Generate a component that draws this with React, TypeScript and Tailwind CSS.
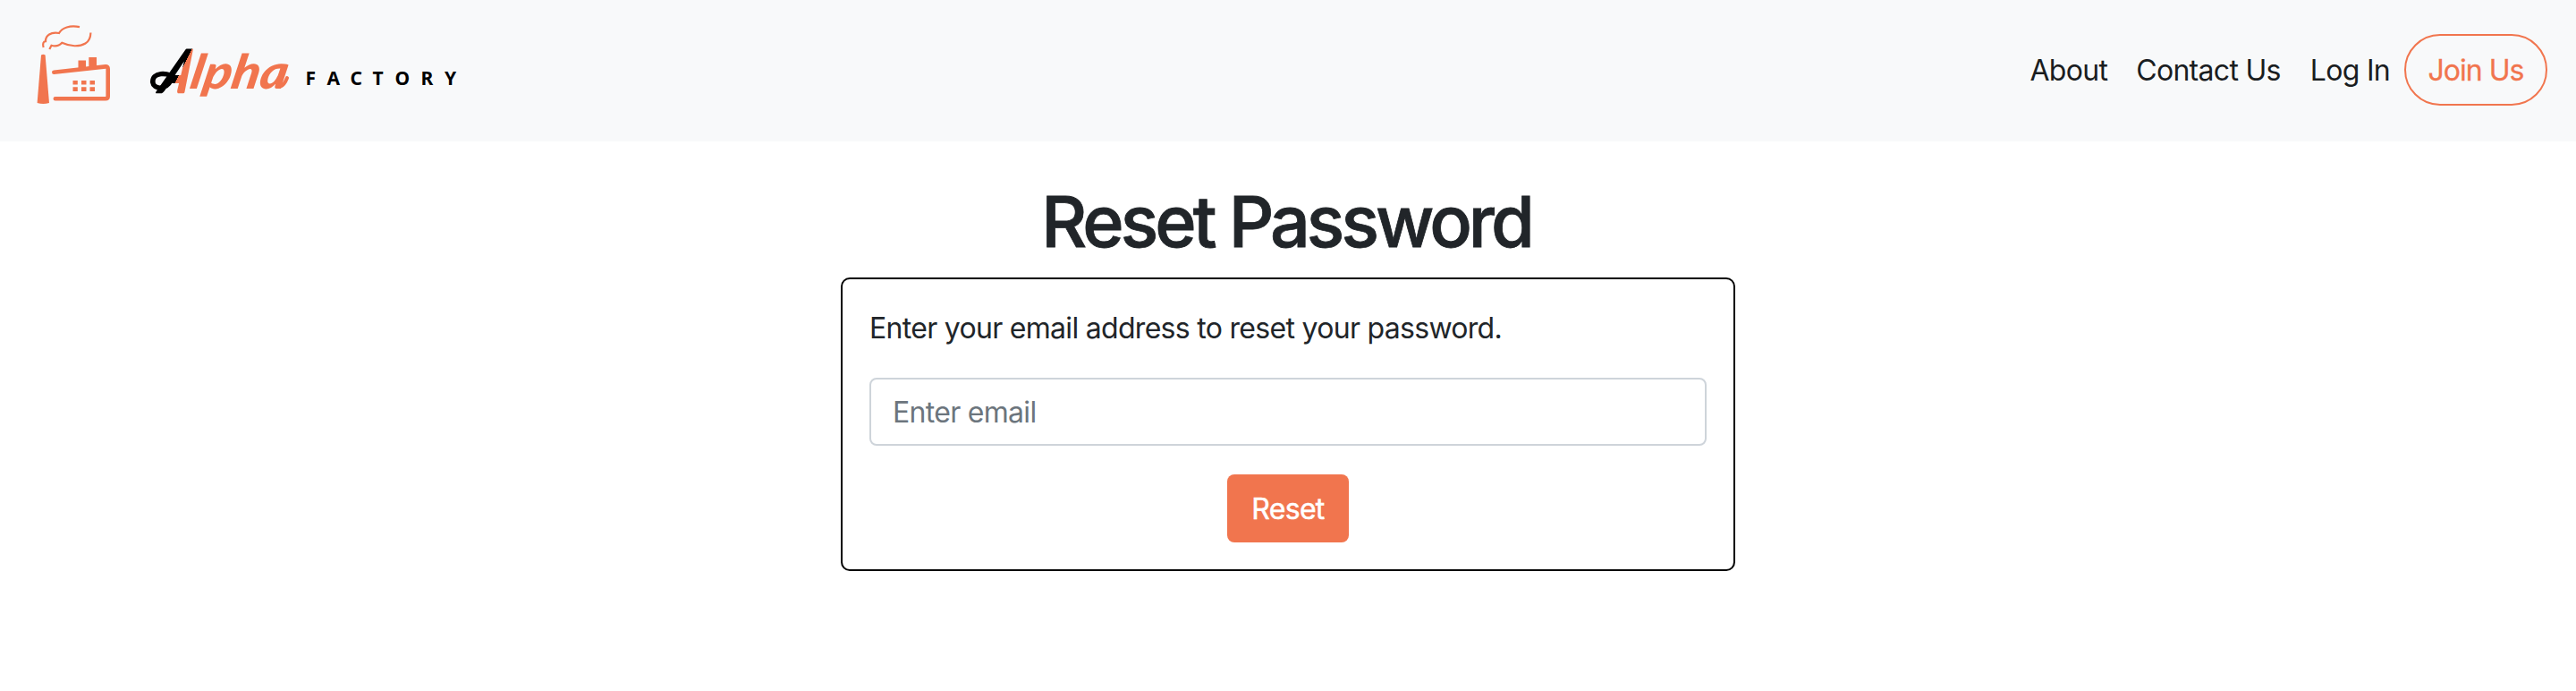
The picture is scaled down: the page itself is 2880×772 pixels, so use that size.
import React from "react";

function FactoryIcon() {
  return (
    <svg width="90" height="96" viewBox="0 0 90 96" className="shrink-0" fill="none">
      <g stroke="#f1754e" strokeWidth="2.2" strokeLinecap="butt">
        <path d="M8.600 29C7.400 25 8.400 22.300 11 22.200C10.700 15.500 17 11.300 26 13C29.500 7 38 4 49 6.200" />
        <path d="M15.300 31L17.500 26.800C22.500 28.400 26.500 26.800 29.300 23.800C38.500 28.200 49 28.300 55.500 24.500C60 21.800 61.300 18 61.400 12.500" />
      </g>
      <path d="M6 37.500Q8.300 36 10.600 37.500L15 91Q8.300 92.800 1.600 91Z" fill="#f1754e" />
      <path d="M20.300 56.800L78 50.400Q80.700 50.300 80.700 53V83.500Q80.700 86.200 78 86.200H21.800" stroke="#f1754e" strokeWidth="4.600" strokeLinecap="round" />
      <path d="M47.500 43.500H56V53L47.500 54ZM59.300 40H68V52L59.300 53Z" fill="#f1754e" />
      <path d="M41.500 66h5.300v4.500h-5.300zM51 66h5.500v4.500H51zM60.500 66h5.500v4.500h-5.500zM41.500 73.300h5.300V78h-5.300zM51 73.300h5.500V78H51zM60.500 73.300h5.500V78h-5.500z" fill="#f1754e" />
    </svg>
  );
}

function Wordmark() {
  return (
    <svg width="360" height="96" viewBox="0 -24 360 96" className="ml-[38px] shrink-0">
      <defs>
        <linearGradient id="split" gradientUnits="userSpaceOnUse" x1="0" y1="0" x2="60" y2="8.2">
          <stop offset="0.22" stopColor="#000" />
          <stop offset="0.22" stopColor="#f1754e" />
        </linearGradient>
      </defs>
      <path d="M23 42C17 53 4 52 2.800 44C2 33 18 31 31 41" fill="none" stroke="#000" strokeWidth="5.500" strokeLinecap="round" />
      <g fontFamily="Lato, sans-serif" fontWeight="900" fontStyle="italic">
        <text transform="translate(9 55) skewX(-20)" fontSize="65" textLength="30" lengthAdjust="spacingAndGlyphs" fill="url(#split)" stroke="url(#split)" strokeWidth="2.5" strokeLinejoin="round">A</text>
        <text transform="translate(43 51) skewX(-11)" fontSize="53" textLength="108" lengthAdjust="spacingAndGlyphs" fill="#f1754e">lpha</text>
      </g>
      <path d="M145 49Q150 47 153 39" fill="none" stroke="#f1754e" strokeWidth="4" strokeLinecap="round" />
      <text x="173.500 197.500 223.500 248.500 273.500 302.500 329" y="47" fontFamily="Noto Sans, sans-serif" fontWeight="700" fontSize="21" fill="#000">FACTORY</text>
    </svg>
  );
}

export default function App() {
  return (
    <div className="min-h-[772px] bg-white font-['Inter',sans-serif] text-[32px] leading-[48px] tracking-[-0.7px] text-[#212529]">
      <nav className="flex h-[158px] items-start justify-between bg-[#f8f9fa] pr-8">
        <a className="flex items-center pl-10 pt-6 tracking-normal">
          <FactoryIcon />
          <Wordmark />
        </a>
        <div className="flex items-center pt-[38px] text-[#1a1d1f]">
          <a className="px-4 pt-0.5">About</a>
          <a className="px-4 pt-0.5">Contact Us</a>
          <a className="pl-[17px] pr-4 pt-0.5">Log In</a>
          <a className="flex h-20 w-40 items-center justify-center rounded-full border-2 border-[#f1754e] pt-0.5 tracking-[-1px] text-[#f1754e] [-webkit-text-stroke:0.3px_#f1754e]">Join Us</a>
        </div>
      </nav>
      <main className="mx-auto w-[1000px] pt-[41px]">
        <h1 className="mb-[15px] pr-1 text-center text-[79px] font-medium leading-[96px] tracking-[-4px] whitespace-nowrap [-webkit-text-stroke:0.8px_#212529]">Reset Password</h1>
        <form className="flex h-[328px] flex-col items-center rounded-[10px] border-2 border-black px-[30px] pt-[31px]">
          <p className="w-full">Enter your email address to reset your password.</p>
          <input
            type="email"
            placeholder="Enter email"
            className="mt-[31px] h-[76px] w-full shrink-0 rounded-lg border-2 border-[#ced4da] bg-white px-6 placeholder:text-[#6c757d]"
          />
          <button type="button" className="mt-8 h-[76px] w-[136px] shrink-0 rounded-lg bg-[#f1754e] pt-0.5 text-white [-webkit-text-stroke:0.5px_#fff]">
            Reset
          </button>
        </form>
      </main>
    </div>
  );
}
